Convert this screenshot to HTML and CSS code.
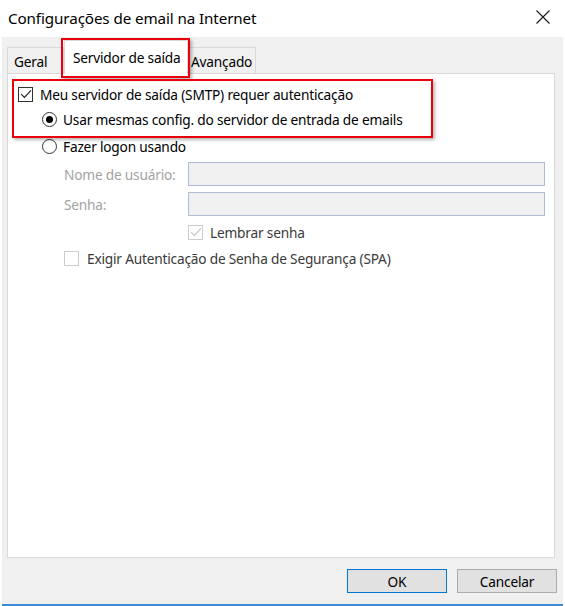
FILE: index.html
```html
<!DOCTYPE html>
<html lang="pt">
<head>
<meta charset="utf-8">
<title>Configurações de email na Internet</title>
<link rel="stylesheet" href="styles.css">
</head>
<body>
<div class="window">
  <div class="titlebar">
    <span class="title">Configurações de email na Internet</span>
    <svg class="close" width="14" height="14" viewBox="0 0 14 14"><path d="M0.5 0.5 L13.5 13.5 M13.5 0.5 L0.5 13.5" stroke="#1a1a1a" stroke-width="1.1" fill="none"/></svg>
  </div>
  <div class="client">
    <div class="tabs">
      <div class="tab tab-geral">Geral</div>
      <div class="tab tab-sel">Servidor de saída</div>
      <div class="tab tab-av">Avançado</div>
    </div>
    <div class="panel">
      <div class="row row1">
        <span class="cb"><svg width="12" height="12" viewBox="0 0 12 12"><path d="M1.2 6.2 L4.4 9.4 L11 2.4" stroke="#222" stroke-width="1.2" fill="none"/></svg></span>
        <span class="lbl gap8">Meu servidor de saída (SMTP) requer autenticação</span>
      </div>
      <div class="row row2">
        <span class="radio on"></span>
        <span class="lbl gap6">Usar mesmas config. do servidor de entrada de emails</span>
      </div>
      <div class="row row3">
        <span class="radio"></span>
        <span class="lbl gap6">Fazer logon usando</span>
      </div>
      <div class="row field row4">
        <span class="flabel">Nome de usuário:</span>
        <span class="input"></span>
      </div>
      <div class="row field row5">
        <span class="flabel">Senha:</span>
        <span class="input"></span>
      </div>
      <div class="row row6">
        <span class="cb dis"><svg width="12" height="12" viewBox="0 0 12 12"><path d="M1.2 6.2 L4.4 9.4 L11 2.4" stroke="#c4c4c4" stroke-width="1.2" fill="none"/></svg></span>
        <span class="lbl gap8 soft">Lembrar senha</span>
      </div>
      <div class="row row7">
        <span class="cb dis"></span>
        <span class="lbl gap9 soft">Exigir Autenticação de Senha de Segurança (SPA)</span>
      </div>
    </div>
    <div class="footer">
      <button class="btn btn-ok">OK</button>
      <button class="btn">Cancelar</button>
    </div>
  </div>
  <div class="mark mark-tab"></div>
  <div class="mark mark-opts"></div>
</div>
</body>
</html>
```
FILE: styles.css
```css
* { box-sizing: border-box; }
html, body { margin: 0; padding: 0; background: #fff; }
body {
  font-family: "Noto Sans", "Open Sans", sans-serif;
  color: #000;
}
.window {
  position: relative;
  width: 565px;
  height: 606px;
  background: #fff;
  display: flex;
  flex-direction: column;
}
.titlebar {
  height: 37px;
  display: flex;
  align-items: center;
  justify-content: space-between;
  padding: 0 15px 2px 8px;
}
.title {
  font-size: 15.2px;
  letter-spacing: -0.1px;
  color: #000;
}
.close { display: block; margin-top: -1px; }
.client {
  flex: 1;
  margin: 0 2px;
  background: #f0f0f0;
  border-bottom: 2px solid #3d8ad6;
  padding: 10px 6px 0 5px;
  display: flex;
  flex-direction: column;
}
.tabs {
  height: 26px;
  display: flex;
  align-items: flex-end;
  font-size: 13.7px;
  letter-spacing: -0.2px;
}
.tab {
  height: 26px;
  border: 1px solid #d9d9d9;
  border-bottom: none;
  background: #f0f0f0;
  display: flex;
  align-items: center;
  padding-top: 2px;
  color: #000;
}
.tab-geral { width: 57px; padding-left: 6px; }
.tab-sel {
  position: relative;
  z-index: 1;
  width: 124px;
  height: 34px;
  margin-bottom: -1px;
  background: #fff;
  padding-left: 8px;
  padding-top: 0;
}
.tab-av { width: 68px; padding-left: 3px; border-left: none; }
.panel {
  height: 485px;
  margin-right: 2px;
  background: #fff;
  border: 1px solid #d9d9d9;
  padding: 0 9px 0 0;
  font-size: 13.7px;
  letter-spacing: -0.2px;
}
.row {
  height: 24px;
  display: flex;
  align-items: center;
}
.row1 { margin-top: 8px; padding-left: 10px; }
.row2 { margin-top: 1px; padding-left: 34px; }
.row3 { margin-top: 3px; padding-left: 34px; }
.row4 { margin-top: 4px; }
.row5 { margin-top: 6px; }
.row6 { margin-top: 4px; padding-left: 180px; }
.row7 { margin-top: 2px; padding-left: 56px; }
.field { padding-left: 56px; }
.flabel {
  width: 124px;
  color: #a3a3a3;
}
.input {
  flex: 1;
  height: 24px;
  background: #f0f0f0;
  border: 1px solid #adbcd4;
}
.cb {
  width: 15px;
  height: 15px;
  border: 1px solid #333;
  background: #fff;
  display: flex;
  align-items: center;
  justify-content: center;
  flex: none;
}
.cb.dis { border-color: #cccccc; }
.radio {
  width: 15px;
  height: 15px;
  border: 1px solid #333;
  border-radius: 50%;
  background: #fff;
  flex: none;
  display: flex;
  align-items: center;
  justify-content: center;
}
.radio.on::after {
  content: "";
  width: 7px;
  height: 7px;
  border-radius: 50%;
  background: #000;
}
.lbl { white-space: nowrap; color: #000; }
.soft { color: #3a3a3a; }
.gap6 { margin-left: 6px; }
.gap8 { margin-left: 7px; }
.gap9 { margin-left: 8px; }
.footer {
  margin-top: 11px;
  display: flex;
  justify-content: flex-end;
  gap: 10px;
}
.btn {
  width: 100px;
  height: 24px;
  background: #e1e1e1;
  border: 1px solid #adadad;
  font-family: "Noto Sans", "Open Sans", sans-serif;
  font-size: 13.7px;
  letter-spacing: -0.2px;
  color: #000;
  padding: 0;
  margin: 0;
}
.btn-ok { border-color: #0078d7; }
.mark {
  position: absolute;
  border: 2px solid #e8000b;
  box-shadow: 2px 2px 3px rgba(0,0,0,0.28);
  pointer-events: none;
}
.mark-tab { left: 61px; top: 38px; width: 129px; height: 40px; }
.mark-opts { left: 12px; top: 79px; width: 421px; height: 59px; }
```
